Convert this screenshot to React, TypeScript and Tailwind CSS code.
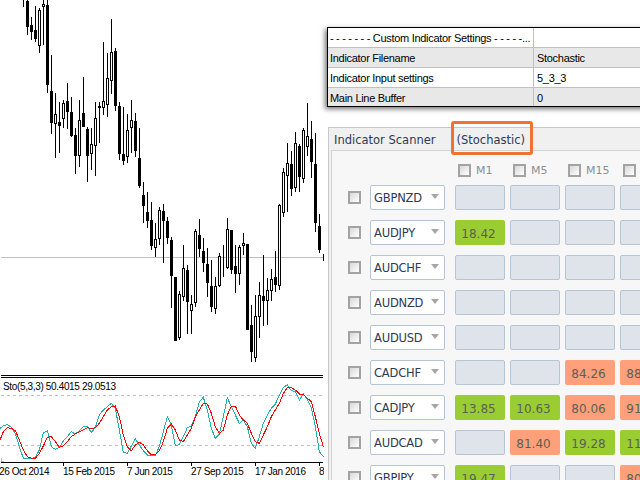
// chart data traced from the reference, y values in 3x units
type Candle = [number, number, number?, number?, number?]

const candles: Candle[] = [
  [0, 20],
  [0, 105, 3, 80, 1],
  [52, 120, 75, 95, 1],
  [18, 125, 90, 117, 1],
  [25, 160, 30, 137, 0],
  [0, 135, 13, 22, 0],
  [0, 278, 15, 255, 1],
  [165, 402, 273, 368, 1],
  [280, 473, 343, 373, 0],
  [307, 458, 366, 377, 1],
  [300, 383, 310, 358, 0],
  [250, 387, 303, 335, 1],
  [291, 410, 336, 408, 1],
  [385, 523, 405, 467, 1],
  [300, 500, 361, 469, 0],
  [232, 380, 339, 380, 1],
  [380, 545, 387, 467, 1],
  [385, 510, 433, 463, 0],
  [305, 527, 355, 439, 0],
  [307, 428, 319, 323, 1],
  [127, 345, 304, 325, 0],
  [160, 350, 235, 316, 0],
  [58, 282, 157, 244, 0],
  [145, 332, 153, 317, 1],
  [307, 480, 318, 461, 1],
  [322, 494, 462, 482, 1],
  [343, 490, 391, 472, 0],
  [300, 460, 361, 385, 0],
  [340, 470, 363, 452, 1],
  [385, 563, 475, 557, 1],
  [545, 668, 586, 617, 1],
  [577, 683, 636, 662, 1],
  [607, 750, 660, 738, 1],
  [670, 772, 718, 745, 0],
  [622, 735, 630, 716, 0],
  [613, 788, 633, 662, 1],
  [652, 732, 663, 715, 1],
  [712, 925, 720, 827, 1],
  [832, 1022, 832, 1022, 1],
  [872, 1020, 883, 1013, 0],
  [735, 903, 805, 890, 0],
  [795, 1002, 810, 905, 1],
  [885, 1002, 913, 932, 0],
  [688, 920, 693, 910, 0],
  [658, 770, 705, 747, 1],
  [715, 815, 753, 788, 1],
  [745, 890, 792, 848, 1],
  [780, 935, 858, 920, 1],
  [830, 942, 857, 928, 0],
  [760, 860, 768, 857, 0],
  [734, 830],
  [655, 808, 688, 805, 0],
  [690, 822, 690, 810, 1],
  [735, 878, 798, 823, 1],
  [735, 855, 742, 822, 0],
  [700, 765, 730, 738, 0],
  [732, 990, 732, 990, 1],
  [915, 1085, 975, 1055, 1],
  [885, 1085, 949, 1073, 0],
  [845, 1015, 886, 950, 0],
  [765, 978, 889, 902, 1],
  [835, 975, 871, 902, 0],
  [808, 902, 838, 872, 0],
  [753, 875, 832, 854, 1],
  [613, 870, 615, 857, 0],
  [505, 650, 517, 640, 0],
  [430, 635, 490, 527, 0],
  [453, 587, 492, 566, 1],
  [397, 575, 430, 563, 0],
  [433, 575, 438, 530, 1],
  [385, 550, 390, 536, 0],
  [310, 467, 408, 440, 0],
  [363, 533, 417, 485, 1],
  [400, 695, 492, 670, 1],
  [643, 758, 678, 750, 1],
  [762, 782],
]

const teal = [565, 558, 553, 562, 580, 620, 655, 656, 655, 652, 630, 578, 572, 620, 628, 622, 603, 590, 575, 582, 572, 560, 560, 577, 563, 525, 510, 500, 490, 505, 570, 637, 640, 618, 597, 615, 632, 645, 646, 646, 620, 575, 530, 555, 618, 613, 590, 563, 558, 530, 485, 472, 510, 565, 595, 582, 530, 473, 500, 525, 550, 540, 560, 610, 625, 590, 550, 525, 505, 492, 465, 443, 434, 452, 455, 480, 462, 478, 503, 560, 635, 650]
const red = [600, 575, 563, 565, 572, 600, 630, 650, 654, 655, 640, 618, 592, 590, 605, 622, 618, 605, 590, 582, 575, 570, 563, 566, 563, 550, 530, 510, 500, 498, 530, 585, 620, 632, 615, 607, 615, 632, 645, 644, 632, 605, 565, 552, 570, 600, 605, 585, 565, 530, 510, 490, 492, 520, 560, 580, 570, 525, 498, 498, 525, 540, 550, 580, 605, 610, 585, 560, 530, 510, 490, 460, 443, 443, 450, 462, 463, 475, 485, 530, 580, 620]

const toPoints = (vals: number[]) =>
  vals.map((v, i) => `${(i === 0 ? 0 : 10 + (i - 1) * 12) / 3},${240 + v / 3}`).join(' ')

const axisLabels = [
  { x: -1, text: '26 Oct 2014' },
  { x: 63, text: '15 Feb 2015' },
  { x: 127, text: '7 Jun 2015' },
  { x: 191, text: '27 Sep 2015' },
  { x: 255, text: '17 Jan 2016' },
  { x: 319, text: '8 May 2016' },
]

const rows = [
  { name: 'GBPNZD', cells: ['', '', '', ''] },
  { name: 'AUDJPY', cells: ['18.42', '', '', ''] },
  { name: 'AUDCHF', cells: ['', '', '', ''] },
  { name: 'AUDNZD', cells: ['', '', '', ''] },
  { name: 'AUDUSD', cells: ['', '', '', ''] },
  { name: 'CADCHF', cells: ['', '', '84.26', '88.41'] },
  { name: 'CADJPY', cells: ['13.85', '10.63', '80.06', '91.22'] },
  { name: 'AUDCAD', cells: ['', '81.40', '19.28', '11.36'] },
  { name: 'GBPJPY', cells: ['19.47', '', '', '80.52'] },
]

const settings = [
  ['- - - - - - - Custom Indicator Settings - - - - -...', '', 'bg-white'],
  ['Indicator Filename', 'Stochastic', 'bg-[#e8e8e8]'],
  ['Indicator Input settings', '5_3_3', 'bg-white'],
  ['Main Line Buffer', '0', 'bg-[#e8e8e8]'],
]

const Check = () => (
  <span className="block w-[13px] h-[13px] shrink-0 border-2 border-[#a3a3a3] bg-linear-to-br from-[#d8d8d8] to-white" />
)

const Cell = ({ value }: { value: string }) => {
  const n = parseFloat(value)
  const color = !value
    ? 'bg-[#dfe3ea] border border-[#b5c5d5]'
    : n < 50
      ? 'bg-[#9acd32]'
      : 'bg-[#ffa07a]'
  return (
    <div
      className={`w-[50px] h-[25px] shrink-0 rounded-[2px] flex items-center justify-center pr-[3px] pt-[2px] text-[12px] text-[#5b5f58] ${color}`}
    >
      {value}
    </div>
  )
}

const App = () => {
  return (
    <div className="w-[640px] h-[480px] overflow-hidden bg-white flex font-['Liberation_Sans',sans-serif]">
      {/* chart side */}
      <div className="w-[327px] shrink-0 flex flex-col">
        <svg width="324" height="375" shapeRendering="crispEdges" className="block shrink-0">
          <rect x="1" y="257" width="322" height="1" fill="#c0c0c0" />
          {candles.map((c, i) => {
            const x = 23 + i * 4
            const [wt, wb, bt, bb, filled] = c
            const top = Math.round(wt / 3)
            const bottom = Math.round(wb / 3)
            return (
              <g key={i}>
                <rect x={x} y={top} width="1" height={bottom - top} fill="#000" />
                {bt !== undefined && bb !== undefined && (
                  <>
                    <rect
                      x={x - 1}
                      y={Math.round(bt / 3)}
                      width="3"
                      height={Math.max(Math.round(bb / 3) - Math.round(bt / 3), 1)}
                      fill="#000"
                    />
                    {!filled && (
                      <rect
                        x={x}
                        y={Math.round(bt / 3) + 1}
                        width="1"
                        height={Math.max(Math.round(bb / 3) - Math.round(bt / 3) - 2, 0)}
                        fill="#fff"
                      />
                    )}
                  </>
                )}
              </g>
            )
          })}
        </svg>
        <div className="relative h-[105px]">
          <svg width="324" height="105" viewBox="0 375 324 105" className="block">
            <g shapeRendering="crispEdges">
              <rect x="1" y="375" width="322" height="1" fill="#000" />
              <rect x="1" y="377" width="322" height="1" fill="#000" />
              <line x1="1" y1="395.5" x2="323" y2="395.5" stroke="#c0c0c0" strokeDasharray="3 3" />
              <line x1="1" y1="445.5" x2="323" y2="445.5" stroke="#c0c0c0" strokeDasharray="3 3" />
              <polyline points={toPoints(teal)} fill="none" stroke="#20b2aa" />
              <polyline points={toPoints(red)} fill="none" stroke="#ff0000" />
              <rect x="1" y="462" width="322" height="1" fill="#000" />
              <path d="M1 458h1v3h2v1H1z" fill="#b8b8b8" />
              {axisLabels.map((l) => (
                <rect key={l.x} x={l.x} y="462" width="1" height="4" fill="#000" />
              ))}
            </g>
            {axisLabels.map((l) => (
              <text key={l.text} x={l.x} y="475" fontSize="10" letterSpacing="-0.4" fill="#000">
                {l.text}
              </text>
            ))}
          </svg>
          <span className="absolute left-[3px] top-[5px] text-[10px] tracking-[-0.35px] leading-[14px] text-black whitespace-nowrap">
            Sto(5,3,3) 50.4015 29.0513
          </span>
        </div>
      </div>

      {/* right side */}
      <div className="relative flex-1 min-w-0 pt-[27px]">
        <div className="w-[320px] border-y border-l border-black shadow-[-2px_2px_5px_rgba(0,0,0,0.55)] text-[11px] tracking-[-0.3px] text-black">
          {settings.map(([label, value, bg], i) => (
            <div key={i} className={`flex h-[20px] last:h-[18px] items-center border-b border-[#c0c0c0] last:border-b-0 ${bg}`}>
              <div className="w-[206px] h-full pl-[2px] pt-[2px] flex items-center whitespace-nowrap border-r border-[#c0c0c0]">
                {label}
              </div>
              <div className="pl-[3px] pt-[2px]">{value}</div>
            </div>
          ))}
        </div>

        <div className="mt-[20px] ml-[1px] w-[330px] h-[360px] border border-[#c8c8c8] bg-[#f0f0f0] font-['DejaVu_Sans',sans-serif]">
          <div className="h-[22px] flex items-center pl-[5px] pt-[3px] gap-[21px] text-[11.5px] text-[#2d3a55]">
            <span>Indicator Scanner</span>
            <span>(Stochastic)</span>
          </div>
          <div className="ml-[2px] h-full border border-[#d4d4d4] bg-[#f7f7f7] pt-[13px]">
            <div className="flex pl-[126px] gap-[5px] h-[21px]">
              {['M1', 'M5', 'M15', ''].map((m, i) => (
                <div key={i} className="w-[50px] shrink-0 flex items-center gap-[5px] h-[13px] text-[11px] text-[#8a9098]">
                  <Check />
                  <span className="pt-[2px]">{m}</span>
                </div>
              ))}
            </div>
            <div className="flex flex-col gap-[10px]">
              {rows.map((r) => (
                <div key={r.name} className="flex items-center h-[25px] pl-[16px]">
                  <Check />
                  <div className="ml-[9px] w-[75px] h-[25px] shrink-0 border border-[#b5c5d5] rounded-[2px] bg-white flex items-center justify-between pl-[3px] pr-[5px] text-[11.5px] tracking-[-0.2px] text-[#2d3a55]">
                    <span className="pt-[2px]">{r.name}</span>
                    <svg width="8" height="5" viewBox="0 0 8 5" className="mb-[2px]">
                      <path d="M0 0h8L4 5z" fill="#a6a6a6" />
                    </svg>
                  </div>
                  <div className="ml-[10px] flex gap-[5px]">
                    {r.cells.map((v, i) => (
                      <Cell key={i} value={v} />
                    ))}
                  </div>
                </div>
              ))}
            </div>
          </div>
        </div>

        {/* orange highlight */}
        <div className="absolute left-[124px] top-[121px] w-[82px] h-[34px] border-[3px] border-[#ed7430] rounded-[3px]" />
      </div>
    </div>
  )
}

export default App
